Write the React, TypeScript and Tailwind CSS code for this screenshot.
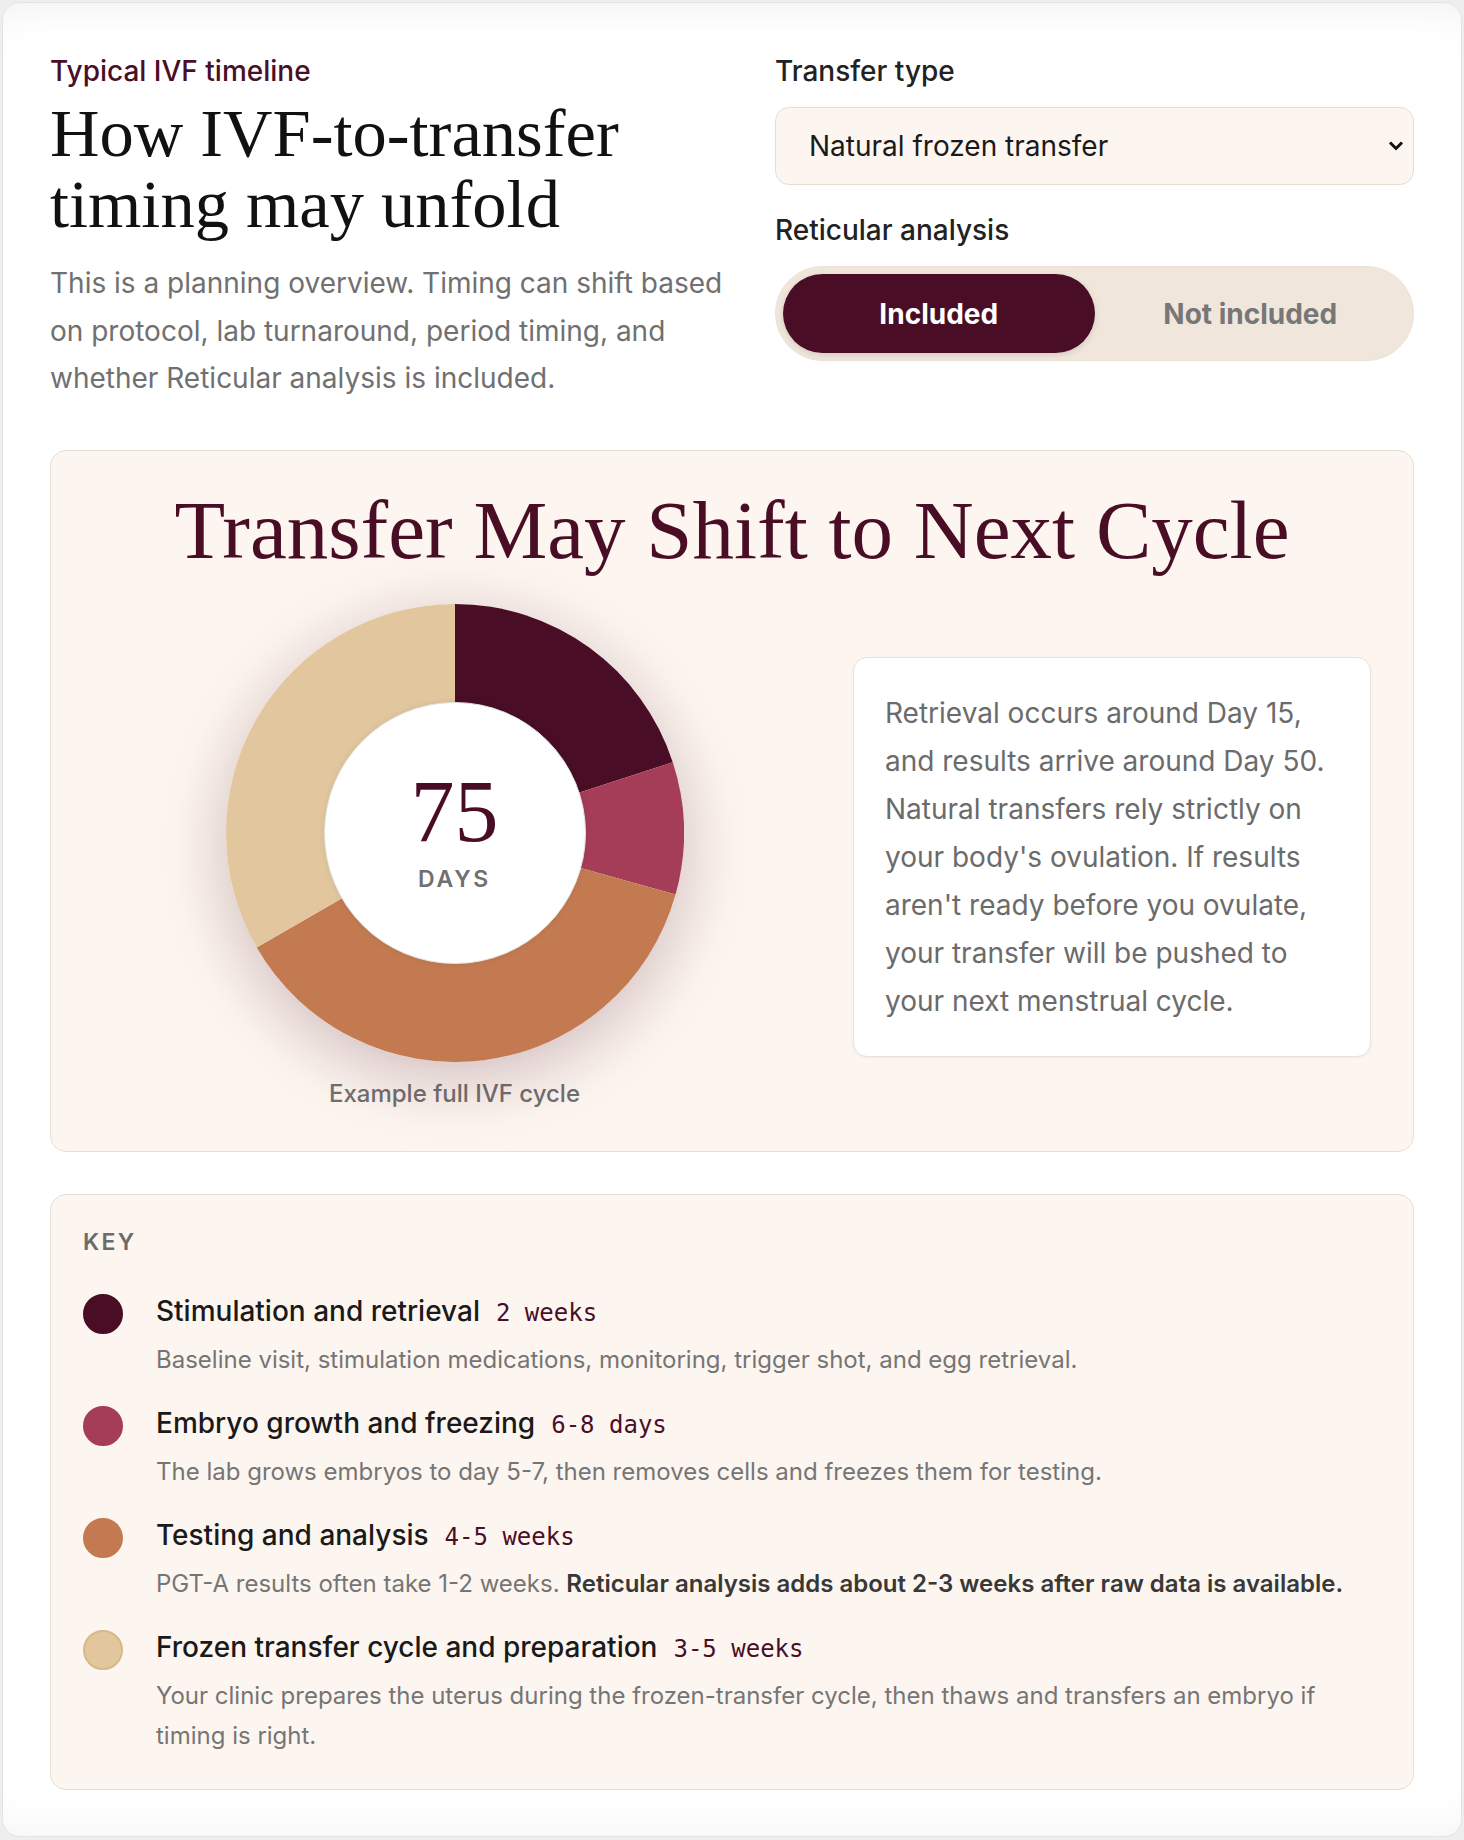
import React, { useState } from 'react';

type Phase = {
  name: string;
  span: string;
  days: number;
  color: string;
  dot: string;
  note: React.ReactNode;
};

const phases: Phase[] = [
  {
    name: 'Stimulation and retrieval',
    span: '2 weeks',
    days: 15,
    color: '#490e26',
    dot: 'bg-[#490e26] border-[#490e26]',
    note: 'Baseline visit, stimulation medications, monitoring, trigger shot, and egg retrieval.',
  },
  {
    name: 'Embryo growth and freezing',
    span: '6-8 days',
    days: 7,
    color: '#a53c58',
    dot: 'bg-[#a53c58] border-[#a53c58]',
    note: 'The lab grows embryos to day 5-7, then removes cells and freezes them for testing.',
  },
  {
    name: 'Testing and analysis',
    span: '4-5 weeks',
    days: 28,
    color: '#c47a50',
    dot: 'bg-[#c47a50] border-[#c47a50]',
    note: (
      <>
        PGT-A results often take 1-2 weeks.{' '}
        <strong className="font-semibold text-[#383838]">
          Reticular analysis adds about 2-3 weeks after raw data is available.
        </strong>
      </>
    ),
  },
  {
    name: 'Frozen transfer cycle and preparation',
    span: '3-5 weeks',
    days: 25,
    color: '#e2c79e',
    dot: 'bg-[#e2c79e] border-[#d6b88a]',
    note: 'Your clinic prepares the uterus during the frozen-transfer cycle, then thaws and transfers an embryo if timing is right.',
  },
];

// pie wedge between two angles, measured clockwise from 12 o'clock
const wedge = (c: number, r: number, a0: number, a1: number) => {
  const p = (a: number) => {
    const rad = (a * Math.PI) / 180;
    return `${c + r * Math.sin(rad)} ${c - r * Math.cos(rad)}`;
  };
  const large = a1 - a0 > 180 ? 1 : 0;
  return `M ${c} ${c} L ${p(a0)} A ${r} ${r} 0 ${large} 1 ${p(a1)} Z`;
};

const Donut = ({ total }: { total: number }) => {
  const size = 458;
  const c = size / 2;
  let start = 0;
  return (
    <div className="relative h-[458px] w-[458px] rounded-full shadow-[0_16px_70px_rgba(74,14,38,0.26)]">
      <svg width={size} height={size} viewBox={`0 0 ${size} ${size}`}>
        {phases.map((ph) => {
          const sweep = (ph.days / total) * 360;
          const d = wedge(c, c, start, start + sweep);
          start += sweep;
          return <path key={ph.name} d={d} fill={ph.color} />;
        })}
      </svg>
      {/* centre label sits on top of the ring */}
      <div className="absolute left-1/2 top-1/2 flex h-[262px] w-[262px] -translate-x-1/2 -translate-y-1/2 flex-col items-center justify-center rounded-full border border-[#e2e2e2] bg-white shadow-[0_0_6px_rgba(0,0,0,0.08)]">
        <span className="font-[family-name:'Liberation_Serif',serif] text-[88px] leading-[80px] text-[#490e26]">
          {total}
        </span>
        <span className="mt-[13px] text-[23px] font-semibold leading-[28px] tracking-[0.12em] text-[#707070]">
          DAYS
        </span>
      </div>
    </div>
  );
};

export default function App() {
  const [transfer, setTransfer] = useState('natural');
  const [reticular, setReticular] = useState(true);
  const total = phases.reduce((s, p) => s + p.days, 0);

  return (
    <div className="min-h-screen bg-[#eeeeee] p-[2px] font-[family-name:Inter,sans-serif]">
      <div className="rounded-[18px] border border-[#e3e3e3] bg-white px-[47px] pt-[52px] pb-[46px] shadow-[inset_0_40px_40px_-32px_rgba(0,0,0,0.05),inset_0_-40px_40px_-32px_rgba(0,0,0,0.04)]">
        {/* Header */}
        <div className="flex items-start gap-[40px]">
          <div className="flex-1">
            <p className="text-[28px] font-medium leading-[32px] text-[#4a0e26]">Typical IVF timeline</p>
            <h1 className="mt-[11px] font-[family-name:'Liberation_Serif',serif] text-[68.5px] leading-[71px] text-[#111]">
              How IVF-to-transfer timing may unfold
            </h1>
            <p className="mt-[20px] text-[28px] leading-[47.5px] text-[#707070]">
              This is a planning overview. Timing can shift based on protocol, lab turnaround, period timing, and
              whether Reticular analysis is included.
            </p>
          </div>

          <div className="w-[639px] shrink-0">
            <label className="block text-[28px] font-medium leading-[32px] text-[#222]">Transfer type</label>
            <div className="relative mt-[20px]">
              <select
                value={transfer}
                onChange={(e) => setTransfer(e.target.value)}
                className="h-[78px] w-full appearance-none rounded-[14px] border border-[#e6ddd3] bg-[#fdf6f0] pl-[33px] pr-[60px] text-[28px] text-[#1a1a1a] outline-none"
              >
                <option value="natural">Natural frozen transfer</option>
                <option value="medicated">Medicated frozen transfer</option>
                <option value="fresh">Fresh transfer</option>
              </select>
              <svg
                className="pointer-events-none absolute right-[10px] top-1/2 -translate-y-1/2"
                width="16"
                height="11"
                viewBox="0 0 16 11"
                fill="none"
              >
                <path d="M2 2l6 6 6-6" stroke="#111" strokeWidth="3" />
              </svg>
            </div>

            <label className="mt-[29px] block text-[28px] font-medium leading-[32px] text-[#222]">
              Reticular analysis
            </label>
            <div className="mt-[20px] grid h-[95px] grid-cols-2 rounded-full border border-[#ebe1d6] bg-[#f0e6dc] p-[7px]">
              <button
                onClick={() => setReticular(true)}
                className={`rounded-full text-[28px] font-bold ${
                  reticular ? 'bg-[#490e26] text-white shadow-[0_2px_6px_rgba(0,0,0,0.12)]' : 'text-[#777]'
                }`}
              >
                Included
              </button>
              <button
                onClick={() => setReticular(false)}
                className={`rounded-full text-[28px] font-bold ${
                  !reticular ? 'bg-[#490e26] text-white shadow-[0_2px_6px_rgba(0,0,0,0.12)]' : 'text-[#777]'
                }`}
              >
                Not included
              </button>
            </div>
          </div>
        </div>

        {/* Chart card */}
        <div className="mt-[47px] rounded-[16px] border border-[#e8e0d6] bg-[#fdf6f0] px-[42px] pt-[38px] pb-[41px]">
          <h2 className="text-center font-[family-name:'Liberation_Serif',serif] text-[83px] leading-[82px] text-[#490e26]">
            Transfer May Shift to Next Cycle
          </h2>
          <div className="mt-[33px] flex items-center gap-[37px]">
            <div className="flex flex-1 flex-col items-center">
              <Donut total={total} />
              <p className="mt-[16px] text-[24px] font-medium leading-[32px] text-[#707070]">Example full IVF cycle</p>
            </div>
            <div className="w-[518px] shrink-0 rounded-[14px] border border-[#e6e2de] bg-white p-[31px] text-[28px] leading-[48px] text-[#6b6b6b] shadow-[0_1px_3px_rgba(0,0,0,0.05)]">
              Retrieval occurs around Day 15, and results arrive around Day 50. Natural transfers rely strictly on
              your body's ovulation. If results aren't ready before you ovulate, your transfer will be pushed to your
              next menstrual cycle.
            </div>
          </div>
        </div>

        {/* Key */}
        <div className="mt-[42px] rounded-[16px] border border-[#e8e0d6] bg-[#fdf6f0] px-[32px] pt-[32px] pb-[33px]">
          <p className="text-[23px] font-semibold leading-[30px] tracking-[0.1em] text-[#6b6b6b]">KEY</p>
          <ul className="mt-[36px] flex flex-col gap-[25px]">
            {phases.map((ph) => (
              <li key={ph.name} className="flex items-start gap-[33px]">
                <span className={`mt-[1px] h-[40px] w-[40px] shrink-0 rounded-full border-2 ${ph.dot}`} />
                <div>
                  <div className="flex items-baseline gap-[16px] leading-[36px]">
                    <span className="text-[28px] font-medium text-[#1a1a1a]">{ph.name}</span>
                    <span className="font-[family-name:'DejaVu_Sans_Mono',monospace] text-[24px] text-[#4a0e26]">
                      {ph.span}
                    </span>
                  </div>
                  <p className="mt-[9px] text-[24px] leading-[40px] text-[#757575]">{ph.note}</p>
                </div>
              </li>
            ))}
          </ul>
        </div>
      </div>
    </div>
  );
}
